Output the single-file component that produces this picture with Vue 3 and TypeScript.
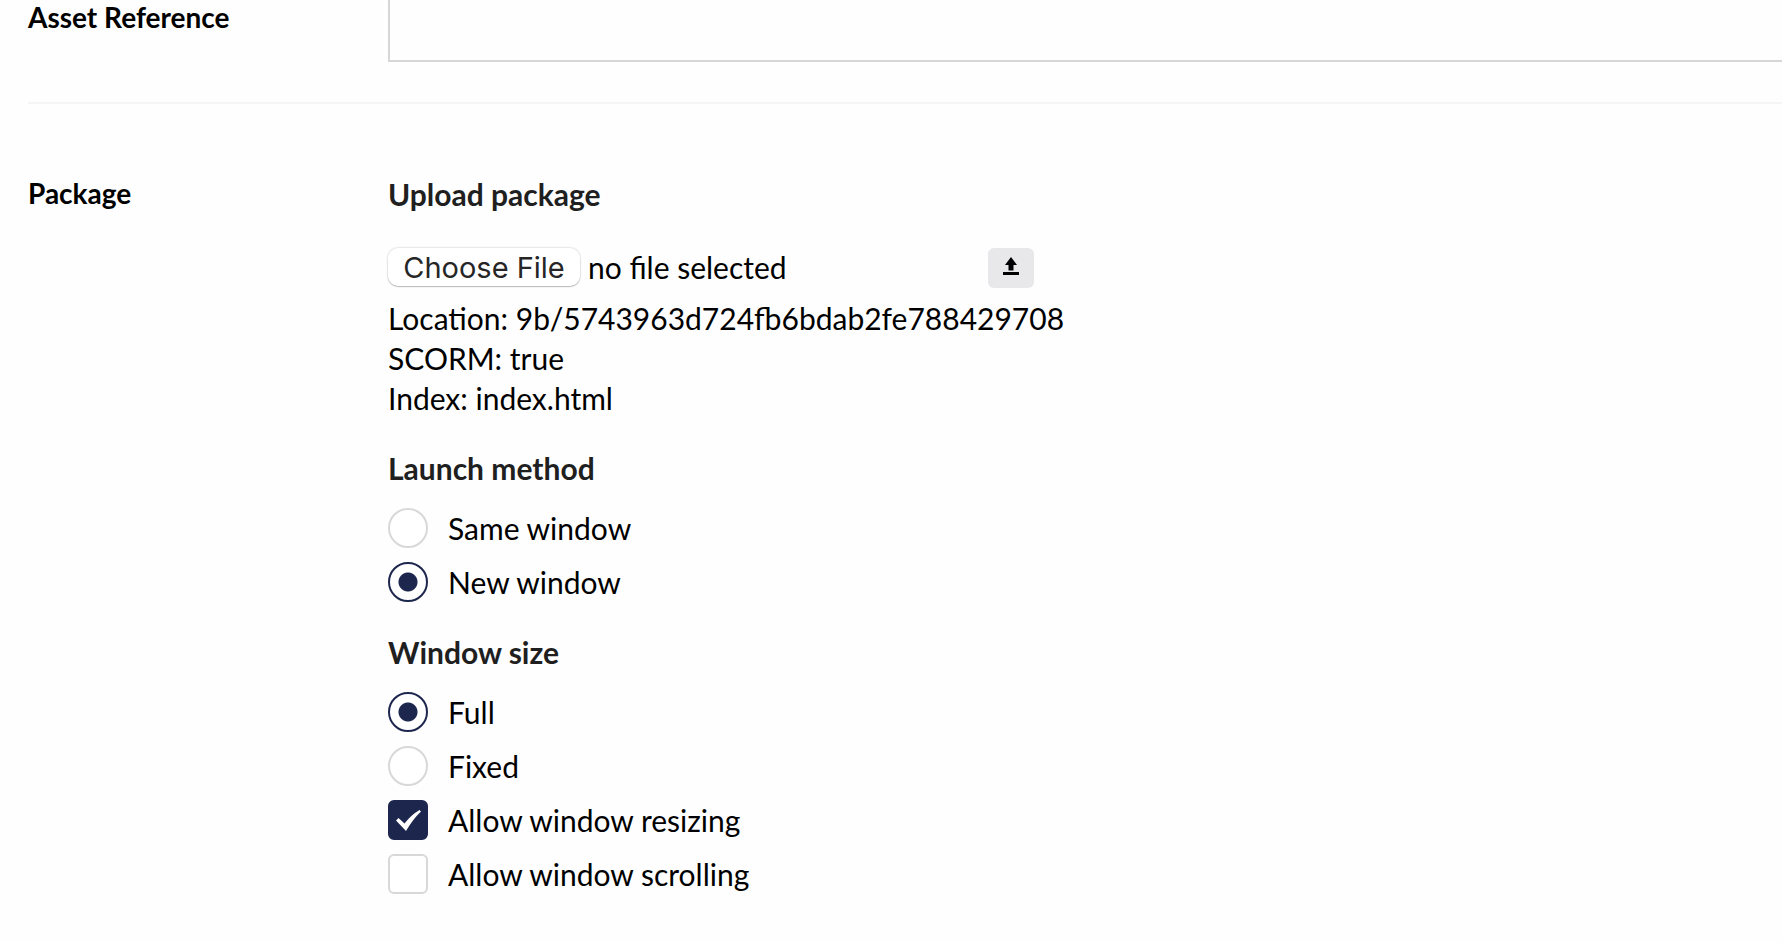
<script setup lang="ts">
import { ref } from 'vue'

interface Option {
  value: string
  label: string
}

const assetReference = ref('')
const fileName = ref('')
const launchMethod = ref('new')
const windowSize = ref('full')
const allowResizing = ref(true)
const allowScrolling = ref(false)

const launchOptions: Option[] = [
  { value: 'same', label: 'Same window' },
  { value: 'new', label: 'New window' },
]

const sizeOptions: Option[] = [
  { value: 'full', label: 'Full' },
  { value: 'fixed', label: 'Fixed' },
]

const details: string[] = [
  'Location: 9b/5743963d724fb6bdab2fe788429708',
  'SCORM: true',
  'Index: index.html',
]

function onFileChange(event: Event) {
  const input = event.target as HTMLInputElement
  fileName.value = input.files?.[0]?.name ?? ''
}
</script>

<template>
  <form class="form" @submit.prevent>
    <div class="row row-reference">
      <label class="row-label" for="asset-reference">Asset Reference</label>
      <input id="asset-reference" v-model="assetReference" class="text-field" type="text" />
    </div>

    <section class="row row-package">
      <h2 class="row-label package-label">Package</h2>
      <div class="content">
        <div class="group">
          <label class="heading upload-heading" for="package-file">Upload package</label>
          <div class="upload">
            <div class="picker">
              <input id="package-file" class="file" type="file" @change="onFileChange" />
              <output class="file-name" for="package-file">{{ fileName || 'no file selected' }}</output>
            </div>
            <button class="upload-button" type="submit" aria-label="Upload">
              <svg width="16" height="18" viewBox="0 0 16 18" aria-hidden="true">
                <path d="M8 0 L14 8 H10.500 V13.500 H5.500 V8 H2 Z M0 15 H16 V18 H0 Z" />
              </svg>
            </button>
          </div>
          <p v-for="line in details" :key="line" class="detail">{{ line }}</p>
        </div>

        <fieldset class="group">
          <legend class="heading">Launch method</legend>
          <div class="options">
            <label v-for="option in launchOptions" :key="option.value" class="option">
              <input v-model="launchMethod" class="radio" type="radio" name="launch" :value="option.value" />
              <span>{{ option.label }}</span>
            </label>
          </div>
        </fieldset>

        <fieldset class="group">
          <legend class="heading">Window size</legend>
          <div class="options">
            <label v-for="option in sizeOptions" :key="option.value" class="option">
              <input v-model="windowSize" class="radio" type="radio" name="size" :value="option.value" />
              <span>{{ option.label }}</span>
            </label>
            <label class="option">
              <span class="check">
                <input v-model="allowResizing" class="checkbox" type="checkbox" />
                <svg v-if="allowResizing" class="tick" width="40" height="40" viewBox="0 0 40 40" aria-hidden="true">
                  <path d="M8 20.500 L10.500 18 L16.500 23.500 Q23 15 31.500 10 L33 11.500 Q25 19 18 31 Z" />
                </svg>
              </span>
              <span>Allow window resizing</span>
            </label>
            <label class="option">
              <span class="check">
                <input v-model="allowScrolling" class="checkbox" type="checkbox" />
                <svg v-if="allowScrolling" class="tick" width="40" height="40" viewBox="0 0 40 40" aria-hidden="true">
                  <path d="M8 20.500 L10.500 18 L16.500 23.500 Q23 15 31.500 10 L33 11.500 Q25 19 18 31 Z" />
                </svg>
              </span>
              <span>Allow window scrolling</span>
            </label>
          </div>
        </fieldset>
      </div>
    </section>
  </form>
</template>

<style>
body {
  margin: 0;
  background: #fefefe;
}
</style>

<style scoped>
.form {
  padding-left: 28px;
  font-family: Lato, sans-serif;
  font-size: 30px;
  line-height: 40px;
  color: #000;
}

.row {
  display: grid;
  grid-template-columns: 360px minmax(0, 1fr);
  align-items: start;
}

.row-reference {
  padding-bottom: 40px;
  border-bottom: 2px solid #f5f5f5;
}

.row-package {
  padding: 70px 0 48px;
}

.row-label {
  margin: 0;
  font-size: 28px;
  font-weight: 700;
  line-height: 34px;
}

.package-label {
  line-height: 38px;
}

.text-field {
  box-sizing: border-box;
  width: 100%;
  height: 62px;
  padding: 0 20px;
  border: solid #d6d6d6;
  border-width: 0 0 2px 2px;
  border-radius: 0;
  background: #fefefe;
  font: inherit;
}

.content {
  display: flex;
  flex-direction: column;
  gap: 30px;
}

.group {
  min-width: 0;
  margin: 0;
  padding: 0;
  border: 0;
}

.heading {
  display: block;
  margin-bottom: 20px;
  padding: 0;
  font-weight: 700;
  color: #1f1f1f;
}

.upload-heading {
  margin-bottom: 34px;
}

.upload {
  display: flex;
  align-items: flex-start;
  margin-bottom: 10px;
}

.picker {
  display: flex;
  align-items: flex-start;
  gap: 8px;
  width: 600px;
}

.file {
  flex: none;
  width: 192px;
  height: 38px;
  border-radius: 10px;
  box-shadow: 0 0 2px rgba(0, 0, 0, 0.3), 0 1px 1px rgba(0, 0, 0, 0.2);
  font-size: 0;
  color: transparent;
}

.file::file-selector-button {
  width: 192px;
  height: 38px;
  margin: 0;
  padding: 0;
  border: 0;
  border-radius: 10px;
  background: #fff;
  font-family: Inter, sans-serif;
  font-size: 29px;
  color: #262626;
}

.file-name {
  line-height: 38px;
}

.upload-button {
  display: flex;
  align-items: center;
  justify-content: center;
  width: 46px;
  height: 40px;
  padding: 0 0 4px;
  border: 0;
  border-radius: 6px;
  background: #e8e8ea;
}

.detail {
  margin: 0;
  overflow-wrap: anywhere;
}

.options {
  display: flex;
  flex-direction: column;
  align-items: flex-start;
  gap: 14px;
}

.option {
  display: flex;
  align-items: center;
  gap: 20px;
}

.radio,
.checkbox {
  appearance: none;
  display: block;
  box-sizing: border-box;
  flex: none;
  width: 40px;
  height: 40px;
  margin: 0;
  border: 2px solid #d8d8d8;
  background: #fff;
}

.radio {
  border-radius: 50%;
}

.radio:checked {
  border-color: #1d264d;
  background: radial-gradient(circle, #1d264d 9px, #fff 10px);
  background-origin: border-box;
}

.check {
  position: relative;
}

.checkbox {
  border-radius: 6px;
}

.checkbox:checked {
  border-color: #1d264d;
  background: #1d264d;
}

.tick {
  position: absolute;
  inset: 0;
  fill: #fff;
  pointer-events: none;
}
</style>
